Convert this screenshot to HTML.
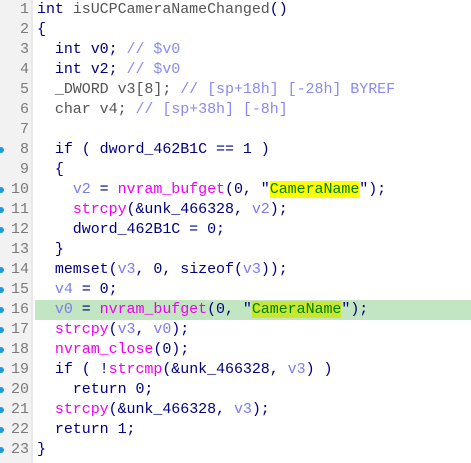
<!DOCTYPE html>
<html><head><style>
body{margin:0;width:471px;height:463px;background:#fff;overflow:hidden;font-family:"Liberation Mono",monospace;font-size:15px;}
.g{position:absolute;left:0;top:0;width:31px;height:463px;background:#f2f2f2;border-right:2px solid #e8e8e8;}
.l{position:absolute;left:0;height:20px;width:471px;line-height:20px;white-space:pre;}
.n{position:absolute;left:0;width:29px;text-align:right;color:#7a7a7a;}
.c{position:absolute;left:37px;color:#000080;letter-spacing:-0.05px;}
.d{position:absolute;left:-2px;top:7px;width:6px;height:6px;border-radius:3px;background:#1e9be0;}
.v{color:#7b7bf0}.m{color:#8a8af0}.f{color:#f000f0}.s{color:#008000}.y{background:#ffff00}.yg{background:#c8e632}.gr{color:#555}
.hl{background:#c2e6c2;left:35px;}
</style></head><body>
<div class="g"></div>
<div class="l" style="top:0"><span class="n">1</span><span class="c">int <span class="gr">isUCPCameraNameChanged</span>()</span></div>
<div class="l" style="top:20px"><span class="n">2</span><span class="c">{</span></div>
<div class="l" style="top:40px"><span class="n">3</span><span class="c">  int v0; <span class="m">// $v0</span></span></div>
<div class="l" style="top:60px"><span class="n">4</span><span class="c">  int v2; <span class="m">// $v0</span></span></div>
<div class="l" style="top:80px"><span class="n">5</span><span class="c"><span class="gr">  _DWORD v3[8];</span> <span class="m">// [sp+18h] [-28h] BYREF</span></span></div>
<div class="l" style="top:100px"><span class="n">6</span><span class="c"><span class="gr">  char v4;</span> <span class="m">// [sp+38h] [-8h]</span></span></div>
<div class="l" style="top:120px"><span class="n">7</span></div>
<div class="l" style="top:140px"><span class="d"></span><span class="n">8</span><span class="c">  if ( dword_462B1C == 1 )</span></div>
<div class="l" style="top:160px"><span class="n">9</span><span class="c">  {</span></div>
<div class="l" style="top:180px"><span class="d"></span><span class="n">10</span><span class="c">    <span class="v">v2</span> = <span class="f">nvram_bufget</span>(0, "<span class="s y">CameraName</span>");</span></div>
<div class="l" style="top:200px"><span class="d"></span><span class="n">11</span><span class="c">    <span class="f">strcpy</span>(&amp;unk_466328, <span class="v">v2</span>);</span></div>
<div class="l" style="top:220px"><span class="d"></span><span class="n">12</span><span class="c">    dword_462B1C = 0;</span></div>
<div class="l" style="top:240px"><span class="n">13</span><span class="c">  }</span></div>
<div class="l" style="top:260px"><span class="d"></span><span class="n">14</span><span class="c">  memset(<span class="v">v3</span>, 0, sizeof(<span class="v">v3</span>));</span></div>
<div class="l" style="top:280px"><span class="d"></span><span class="n">15</span><span class="c">  <span class="v">v4</span> = 0;</span></div>
<div class="l" style="top:300px"><span class="d"></span><span class="n">16</span><span class="c hl" style="width:436px;left:35px;padding-left:2px">  <span class="v">v0</span> = <span class="f">nvram_bufget</span>(0, "<span class="s yg">CameraName</span>");</span></div>
<div class="l" style="top:320px"><span class="d"></span><span class="n">17</span><span class="c">  <span class="f">strcpy</span>(<span class="v">v3</span>, <span class="v">v0</span>);</span></div>
<div class="l" style="top:340px"><span class="d"></span><span class="n">18</span><span class="c">  <span class="f">nvram_close</span>(0);</span></div>
<div class="l" style="top:360px"><span class="d"></span><span class="n">19</span><span class="c">  if ( !<span class="f">strcmp</span>(&amp;unk_466328, <span class="v">v3</span>) )</span></div>
<div class="l" style="top:380px"><span class="d"></span><span class="n">20</span><span class="c">    return 0;</span></div>
<div class="l" style="top:400px"><span class="d"></span><span class="n">21</span><span class="c">  <span class="f">strcpy</span>(&amp;unk_466328, <span class="v">v3</span>);</span></div>
<div class="l" style="top:420px"><span class="d"></span><span class="n">22</span><span class="c">  return 1;</span></div>
<div class="l" style="top:440px"><span class="d"></span><span class="n">23</span><span class="c">}</span></div>
</body></html>
